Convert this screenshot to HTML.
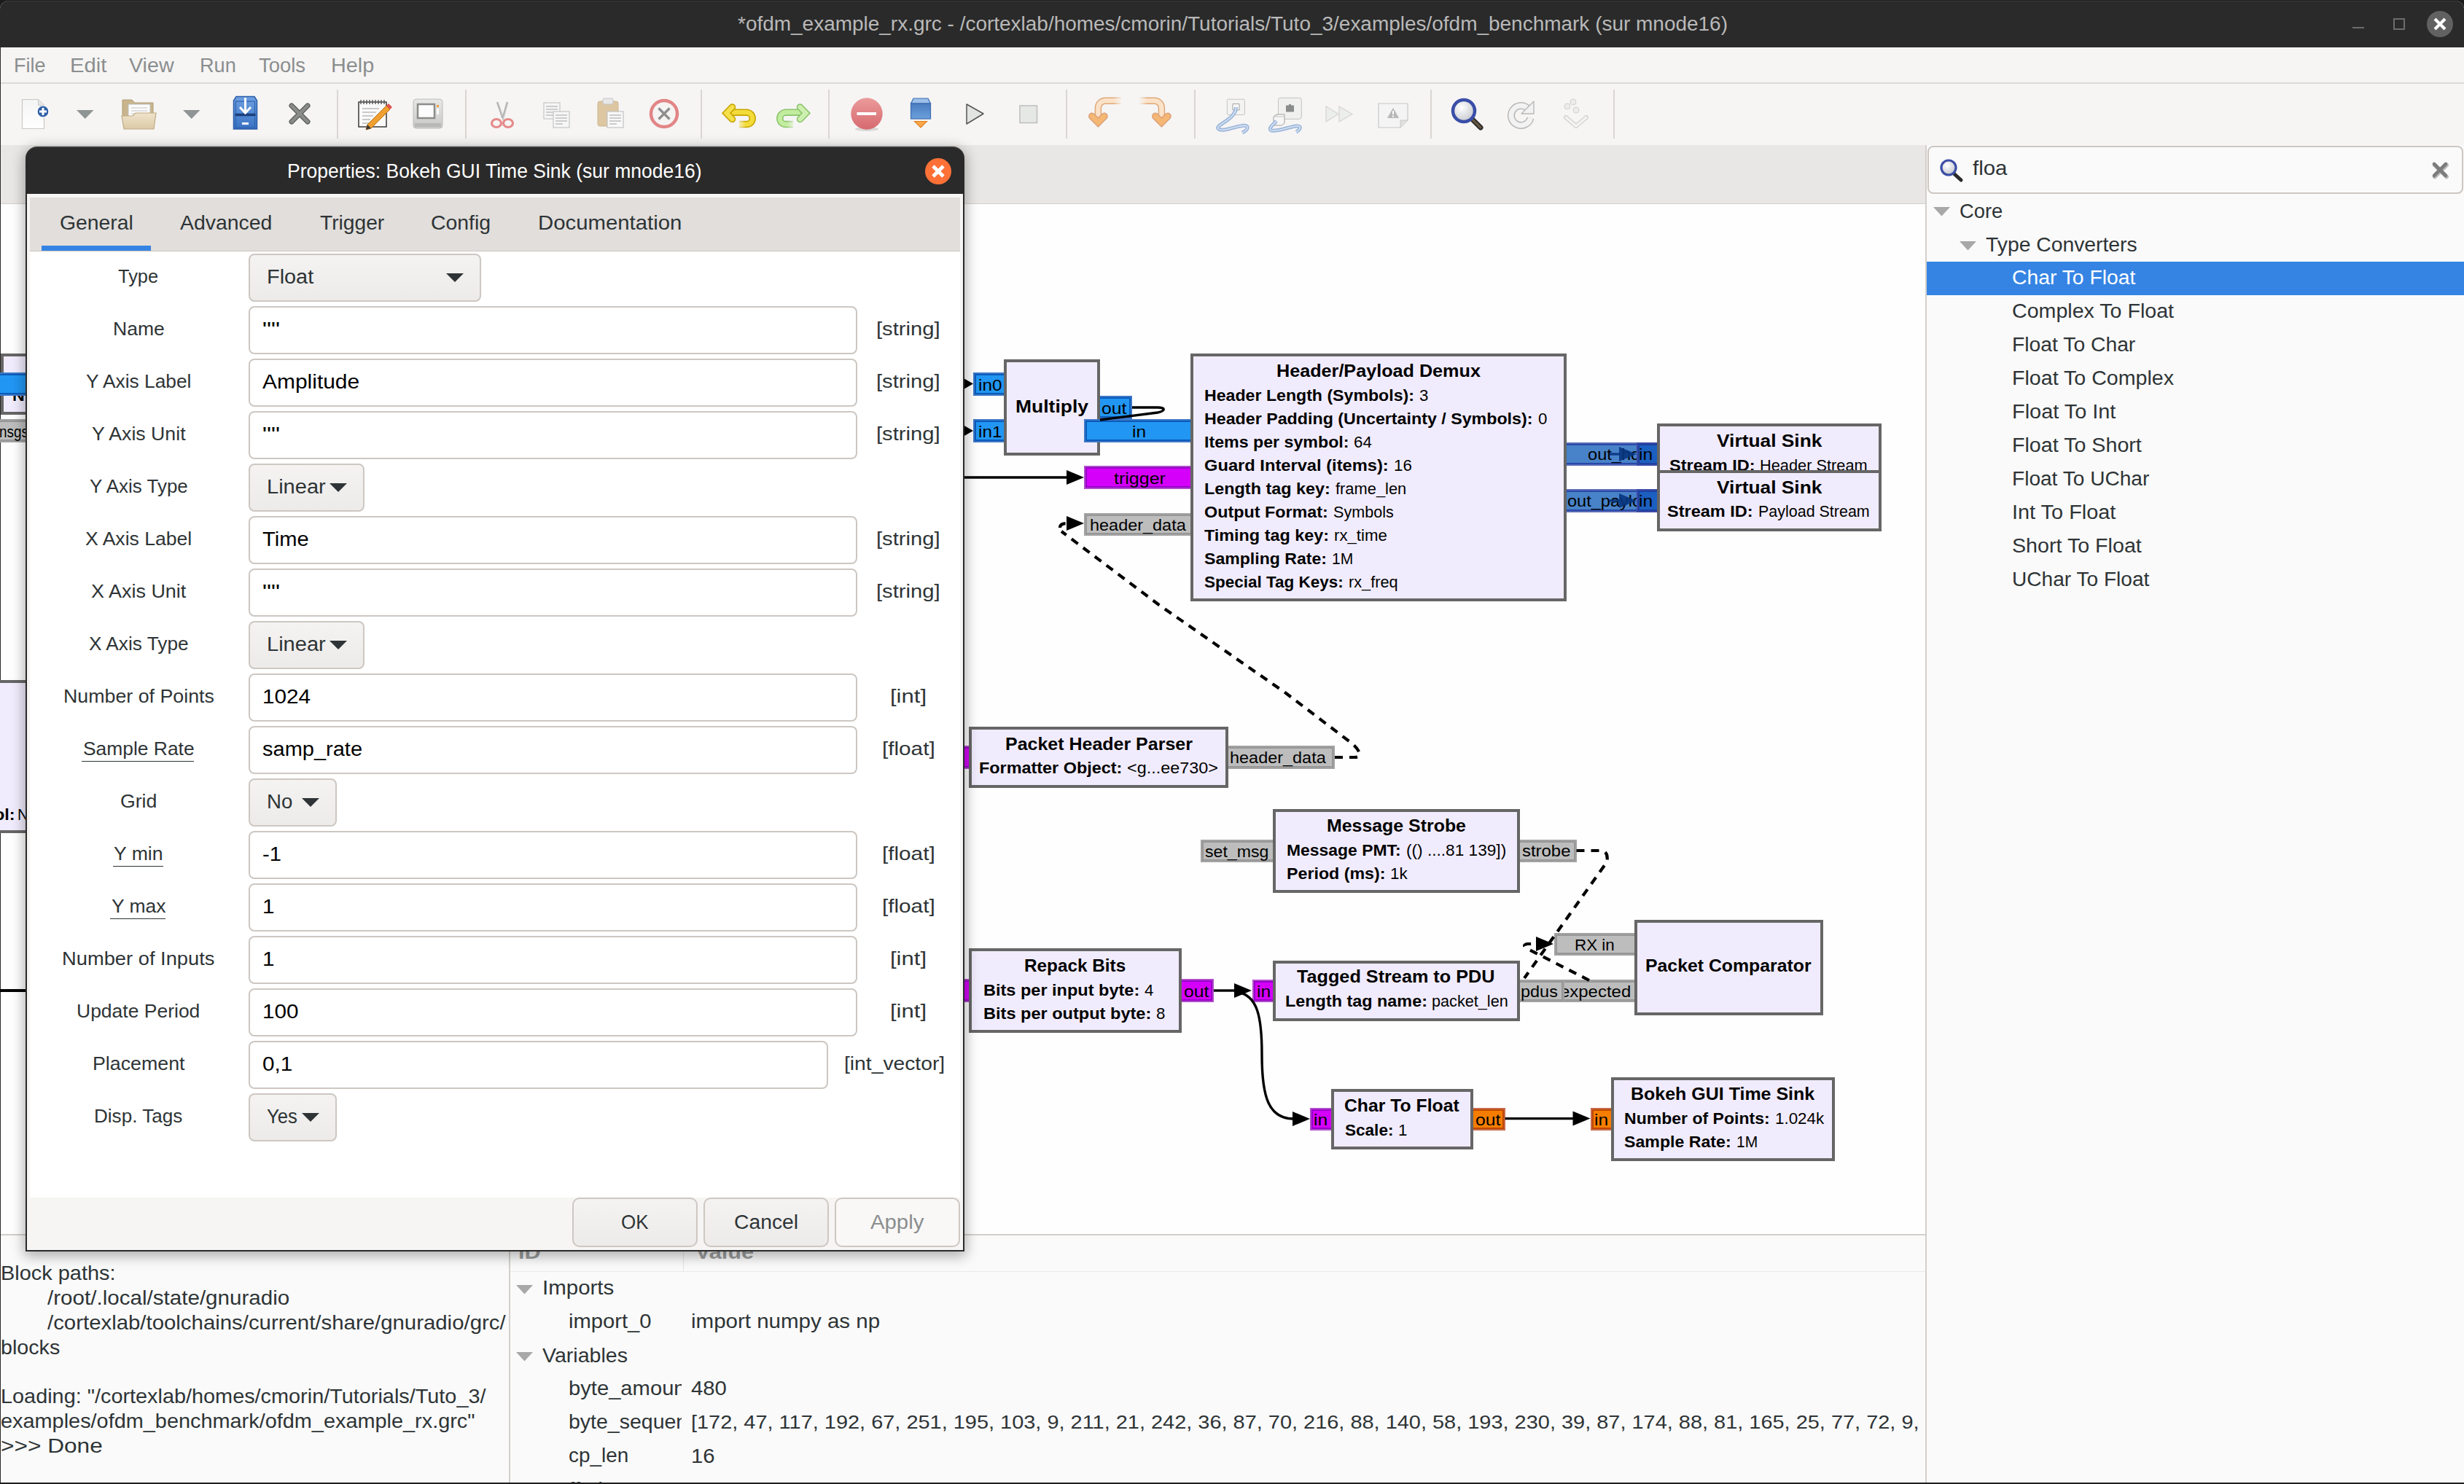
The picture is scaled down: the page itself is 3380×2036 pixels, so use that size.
<!DOCTYPE html>
<html><head><meta charset="utf-8">
<style>
*{margin:0;padding:0;box-sizing:border-box}
html,body{width:3380px;height:2036px;overflow:hidden;background:#1b1b1b;font-family:"Liberation Sans",sans-serif}
.a{position:absolute}
.t{position:absolute;white-space:pre;line-height:1;transform-origin:0 0}
svg{position:absolute;overflow:visible}
</style></head><body>
<div class="a" style="left:0px;top:0px;width:3380px;height:2036px;background:#1b1b1b"></div>
<div class="a" style="left:0;top:1px;width:3380px;height:2035px;border-radius:12px 12px 0 0;overflow:hidden;background:#f6f5f4"><div class="a" style="left:0;top:0;width:3380px;height:64px;background:#2a2a2a;border-top:1px solid #3b3b3b"></div></div>
<div class="t" style="left:1012.0px;top:20.1px;font-size:27.00px;color:#b9b9b9;transform:scaleX(1.0358);">*ofdm_example_rx.grc - /cortexlab/homes/cmorin/Tutorials/Tuto_3/examples/ofdm_benchmark (sur mnode16)</div>
<div class="a" style="left:3227px;top:37px;width:16px;height:2px;background:#6c6c6c"></div>
<div class="a" style="left:3283px;top:25px;width:16px;height:16px;border:2px solid #6c6c6c"></div>
<svg style="left:3329px;top:15px" width="36" height="36" viewBox="0 0 36 36"><circle cx="18" cy="18" r="18" fill="#616161"/><path d="M11 11L25 25M25 11L11 25" stroke="#fff" stroke-width="4.2" stroke-linecap="butt"/></svg>
<div class="a" style="left:0px;top:65px;width:3380px;height:48px;background:#f6f5f4"></div>
<div class="a" style="left:0px;top:113px;width:3380px;height:2px;background:#dcdad7"></div>
<div class="t" style="left:19.0px;top:75.6px;font-size:27.56px;color:#8b8e8f;transform:scaleX(0.9797);">File</div>
<div class="t" style="left:96.0px;top:75.6px;font-size:27.56px;color:#8b8e8f;transform:scaleX(1.0602);">Edit</div>
<div class="t" style="left:177.0px;top:75.6px;font-size:27.56px;color:#8b8e8f;transform:scaleX(1.0415);">View</div>
<div class="t" style="left:274.0px;top:75.6px;font-size:27.56px;color:#8b8e8f;transform:scaleX(0.9861);">Run</div>
<div class="t" style="left:355.0px;top:75.6px;font-size:27.56px;color:#8b8e8f;transform:scaleX(0.9955);">Tools</div>
<div class="t" style="left:454.0px;top:75.6px;font-size:27.56px;color:#8b8e8f;transform:scaleX(1.0457);">Help</div>
<div class="a" style="left:0px;top:115px;width:3380px;height:84px;background:#f6f5f4"></div>
<div class="a" style="left:462px;top:123px;width:2px;height:67px;background:#dad6d2"></div>
<div class="a" style="left:638px;top:123px;width:2px;height:67px;background:#dad6d2"></div>
<div class="a" style="left:961px;top:123px;width:2px;height:67px;background:#dad6d2"></div>
<div class="a" style="left:1136px;top:123px;width:2px;height:67px;background:#dad6d2"></div>
<div class="a" style="left:1462px;top:123px;width:2px;height:67px;background:#dad6d2"></div>
<div class="a" style="left:1638px;top:123px;width:2px;height:67px;background:#dad6d2"></div>
<div class="a" style="left:1962px;top:123px;width:2px;height:67px;background:#dad6d2"></div>
<div class="a" style="left:2213px;top:123px;width:2px;height:67px;background:#dad6d2"></div>
<div class="a" style="left:0px;top:199px;width:2641px;height:80px;background:#e8e7e5"></div>
<div class="a" style="left:0px;top:279px;width:2641px;height:1px;background:#d3cfcb"></div>
<div class="a" style="left:0px;top:280px;width:2641px;height:1414px;background:#fefefe"></div>
<div class="a" style="left:0px;top:1694px;width:2641px;height:342px;background:#fafafa"></div>
<div class="a" style="left:0px;top:1693px;width:2641px;height:1.5px;background:#d3cfcb"></div>
<div class="a" style="left:698px;top:1694px;width:1.5px;height:342px;background:#d3cfcb"></div>
<div class="a" style="left:2641px;top:199px;width:739px;height:1837px;background:#fafafa"></div>
<div class="a" style="left:2641px;top:199px;width:1.5px;height:1837px;background:#d3cfcb"></div>
<div class="a" style="left:0px;top:65px;width:1px;height:1971px;background:#2a2a2a"></div>
<svg style="left:28px;top:134px" width="42" height="46" viewBox="0 0 42 46"><defs><linearGradient id="pg" x1="0" y1="0" x2="0" y2="1"><stop offset="0" stop-color="#f4f4f4"/><stop offset="1" stop-color="#ffffff"/></linearGradient></defs><path d="M2.5 2.5H24.5L32.5 10.5V42.5H2.5Z" fill="url(#pg)" stroke="#c8c8c8" stroke-width="1.2"/><path d="M24.5 2.5V10.5H32.5" fill="#e6e6e6" stroke="#c8c8c8" stroke-width="1"/><circle cx="31" cy="19" r="8" fill="#2f5fa6" stroke="#ffffff" stroke-width="1.2"/><path d="M31 14V24M26 19H36" stroke="#fff" stroke-width="3"/></svg>
<svg style="left:105.4px;top:151px" width="24" height="12" viewBox="0 0 24 12"><path d="M0 0H23.5L11.75 12Z" fill="#8f9494"/></svg>
<svg style="left:251px;top:151px" width="24" height="12" viewBox="0 0 24 12"><path d="M0 0H23.5L11.75 12Z" fill="#8f9494"/></svg>
<svg style="left:166px;top:133px" width="50" height="46" viewBox="0 0 50 46"><path d="M2 4H15L19 8H44V30H2Z" fill="#c9b48d" stroke="#b09c74" stroke-width="1"/><rect x="10" y="10" width="30" height="22" fill="#fbfbfb" stroke="#bdbdbd" stroke-width="1"/><path d="M14 15H36M14 19H36M14 23H33M14 27H28" stroke="#c4c4c4" stroke-width="1.2"/><defs><linearGradient id="fg" x1="0" y1="0" x2="0" y2="1"><stop offset="0" stop-color="#efe3cc"/><stop offset="1" stop-color="#dccaa6"/></linearGradient></defs><path d="M1 26H16L20 22H48L45 44H4Z" fill="url(#fg)" stroke="#c0aa80" stroke-width="1.2"/></svg>
<svg style="left:319px;top:131px" width="36" height="48" viewBox="0 0 36 48"><defs><linearGradient id="sg" x1="0" y1="0" x2="0" y2="1"><stop offset="0" stop-color="#6fa0e0"/><stop offset="1" stop-color="#3a73c4"/></linearGradient></defs><path d="M1.5 7L5 1.5H30L33.5 7V46H1.5Z" fill="url(#sg)" stroke="#2a5ca8" stroke-width="1.5"/><rect x="4.5" y="8" width="26" height="17" fill="none" stroke="#2f63b0" stroke-width="1.2"/><rect x="4.5" y="28" width="26" height="16" fill="none" stroke="#2f63b0" stroke-width="1.2"/><rect x="3.5" y="25" width="28" height="3" fill="#1f3f78"/><path d="M13 37H22V40H13Z" fill="#fff"/><path d="M17.5 3V23" stroke="#fff" stroke-width="3"/><path d="M10 16L17.5 24L25 16" fill="none" stroke="#fff" stroke-width="3"/></svg>
<svg style="left:395px;top:140px" width="33" height="33" viewBox="0 0 33 33"><path d="M5 5L27 27M27 5L5 27" stroke="#5c5e5c" stroke-width="7" stroke-linecap="round"/><path d="M5 5L27 27M27 5L5 27" stroke="#8a8c8a" stroke-width="4.5" stroke-linecap="round"/></svg>
<svg style="left:490px;top:135px" width="50" height="42" viewBox="0 0 50 42"><rect x="2" y="5" width="38" height="34" fill="#fafafa" stroke="#3a3a3a" stroke-width="1.5"/><path d="M5 2V8M9 2V8M13 2V8M17 2V8M21 2V8M25 2V8M29 2V8M33 2V8M37 2V8" stroke="#555" stroke-width="1.4"/><path d="M7 14H30M7 19H26M7 24H22M7 29H18M7 34H16" stroke="#9a9a9a" stroke-width="1.2"/><path d="M14 36L40 10L45 15L19 41L12 43Z" fill="#f0a030" stroke="#b86a10" stroke-width="1"/><path d="M40 10L43 7L48 12L45 15Z" fill="#e05050"/><path d="M12 43L14 36L19 41Z" fill="#3a3a3a"/></svg>
<svg style="left:566px;top:135px" width="44" height="44" viewBox="0 0 44 44"><defs><linearGradient id="mg" x1="0" y1="0" x2="0" y2="1"><stop offset="0" stop-color="#e8e8e6"/><stop offset="1" stop-color="#c8c8c6"/></linearGradient></defs><rect x="1" y="1" width="40" height="40" rx="4" fill="url(#mg)" stroke="#bcbcba" stroke-width="1"/><rect x="7" y="8" width="23" height="19" fill="#fcfcfc" stroke="#8c8c8a" stroke-width="2.5"/><rect x="33" y="9" width="3" height="3" fill="#f0a040"/><rect x="33" y="14" width="3" height="8" fill="#fafafa"/><rect x="3" y="34" width="36" height="5" fill="#b8b8b6"/></svg>
<svg style="left:673px;top:138px" width="32" height="40" viewBox="0 0 32 40"><path d="M9 2L17 24L23 2" fill="none" stroke="#c8c8c8" stroke-width="3"/><path d="M9 2L16 24M23 2L16 24" fill="none" stroke="#a8a8a8" stroke-width="1"/><ellipse cx="8" cy="31" rx="6.5" ry="5.5" fill="none" stroke="#e68a8a" stroke-width="3.2"/><ellipse cx="24" cy="31" rx="6.5" ry="5.5" fill="none" stroke="#e68a8a" stroke-width="3.2"/></svg>
<svg style="left:745px;top:140px" width="38" height="38" viewBox="0 0 38 38"><rect x="1" y="1" width="22" height="22" fill="#f6f6f6" stroke="#c6c6c6" stroke-width="1.2"/><path d="M4 6H20M4 10H20M4 14H20M4 18H14" stroke="#c0c0c0" stroke-width="1.4"/><rect x="14" y="13" width="22" height="22" fill="#f6f6f6" stroke="#c6c6c6" stroke-width="1.2"/><path d="M17 18H33M17 22H33M17 26H33M17 30H27" stroke="#c0c0c0" stroke-width="1.4"/></svg>
<svg style="left:818px;top:134px" width="40" height="44" viewBox="0 0 40 44"><rect x="2" y="5" width="28" height="34" rx="3" fill="#dcc7a2" stroke="#cdb68e" stroke-width="1"/><rect x="9" y="1" width="14" height="8" rx="2" fill="#e8e8e8" stroke="#c4c4c4" stroke-width="1"/><rect x="15" y="19" width="22" height="22" fill="#f8f8f8" stroke="#c4c4c4" stroke-width="1.2"/><path d="M18 24H34M18 28H34M18 32H34M18 36H28" stroke="#bdbdbd" stroke-width="1.4"/></svg>
<svg style="left:889px;top:134px" width="44" height="44" viewBox="0 0 44 44"><circle cx="22" cy="22" r="18" fill="#f6f3f3" stroke="#e28585" stroke-width="4.5"/><path d="M14.5 14.5L29.5 29.5M29.5 14.5L14.5 29.5" stroke="#8d8d8d" stroke-width="3.2"/></svg>
<svg style="left:988px;top:138px" width="52" height="42" viewBox="0 0 52 42"><defs><linearGradient id="fd1" x1="0" y1="0" x2="1" y2="0"><stop offset="0" stop-color="#f6f5f4" stop-opacity="1"/><stop offset="1" stop-color="#f6f5f4" stop-opacity="0"/></linearGradient><linearGradient id="fd2" x1="1" y1="0" x2="0" y2="0"><stop offset="0" stop-color="#f6f5f4" stop-opacity="1"/><stop offset="1" stop-color="#f6f5f4" stop-opacity="0"/></linearGradient></defs><path d="M26 32.6H36A8.2 8.2 0 0 0 36 16.2H12" fill="none" stroke="#c9a400" stroke-width="9.5"/><path d="M26 32.6H36A8.2 8.2 0 0 0 36 16.2H12" fill="none" stroke="#f2dc3a" stroke-width="6.2"/><path d="M16.5 9L8.5 17.2L16.5 25.5" fill="none" stroke="#c9a400" stroke-width="9.5" stroke-linejoin="miter" stroke-linecap="round"/><path d="M16.5 9L8.5 17.2L16.5 25.5" fill="none" stroke="#f4e04a" stroke-width="6.2" stroke-linejoin="miter" stroke-linecap="round"/><rect x="21" y="26.5" width="14" height="12" fill="url(#fd1)"/></svg>
<svg style="left:1062px;top:138px" width="52" height="42" viewBox="0 0 52 42"><path d="M26 32.6H16A8.2 8.2 0 0 1 16 16.2H40" fill="none" stroke="#8cc46c" stroke-width="9.5"/><path d="M26 32.6H16A8.2 8.2 0 0 1 16 16.2H40" fill="none" stroke="#c2ec9e" stroke-width="6.2"/><path d="M35.5 9L43.5 17.2L35.5 25.5" fill="none" stroke="#8cc46c" stroke-width="9.5" stroke-linejoin="miter" stroke-linecap="round"/><path d="M35.5 9L43.5 17.2L35.5 25.5" fill="none" stroke="#cdf0b0" stroke-width="6.2" stroke-linejoin="miter" stroke-linecap="round"/><rect x="17" y="26.5" width="14" height="12" fill="url(#fd2)"/></svg>
<svg style="left:1166px;top:133px" width="46" height="48" viewBox="0 0 46 48"><defs><linearGradient id="rg" x1="0" y1="0" x2="0" y2="1"><stop offset="0" stop-color="#eb9a9a"/><stop offset="1" stop-color="#d66a70"/></linearGradient></defs><ellipse cx="23" cy="44" rx="16" ry="3" fill="#000" opacity=".12"/><circle cx="23" cy="23" r="21.7" fill="url(#rg)"/><rect x="9.5" y="21" width="26.5" height="4" fill="#fff"/></svg>
<svg style="left:1247px;top:133px" width="32" height="46" viewBox="0 0 32 46"><defs><linearGradient id="cg" x1="0" y1="0" x2="0" y2="1"><stop offset="0" stop-color="#4a7cc0"/><stop offset="1" stop-color="#6ca0dc"/></linearGradient></defs><path d="M2.5 9L6 2H26L29.5 9Z" fill="#9cc0ea" stroke="#3d6cb0" stroke-width="1.2"/><rect x="2.5" y="9" width="27" height="21" fill="url(#cg)" stroke="#3d6cb0" stroke-width="1.2"/><path d="M7.5 33.5H24.5L16 42Z" fill="#f8a848" stroke="#e08020" stroke-width="1.2"/></svg>
<svg style="left:1323px;top:140px" width="30" height="34" viewBox="0 0 30 34"><path d="M3 3L26 16L3 30Z" fill="#e2e4e2" stroke="#555" stroke-width="1.5" stroke-linejoin="round"/></svg>
<svg style="left:1397px;top:143px" width="28" height="28" viewBox="0 0 28 28"><rect x="2" y="2" width="23.5" height="23.5" fill="#e6e8e6" stroke="#bdbdbd" stroke-width="1.5"/></svg>
<svg style="left:1490px;top:132px" width="50" height="48" viewBox="0 0 50 48"><defs><linearGradient id="of1" x1="0" y1="0" x2="1" y2="0"><stop offset="0.55" stop-color="#f6f5f4" stop-opacity="0"/><stop offset="1" stop-color="#f6f5f4" stop-opacity="1"/></linearGradient></defs><path d="M16.4 36V16A9.8 9.8 0 0 1 26.2 6.2H48" fill="none" stroke="#e0a878" stroke-width="9.5"/><path d="M16.4 36V16A9.8 9.8 0 0 1 26.2 6.2H48" fill="none" stroke="#fbe2c8" stroke-width="6.5"/><path d="M8 27.5L16.4 36L24.8 27.5" fill="none" stroke="#dca07a" stroke-width="10" stroke-linejoin="miter" stroke-linecap="round"/><path d="M8 27.5L16.4 36L24.8 27.5" fill="none" stroke="#f4b774" stroke-width="7" stroke-linejoin="miter" stroke-linecap="round"/><rect x="22" y="0" width="28" height="13" fill="url(#of1)"/></svg>
<svg style="left:1562px;top:132px" width="50" height="48" viewBox="0 0 50 48"><defs><linearGradient id="of2" x1="1" y1="0" x2="0" y2="0"><stop offset="0.55" stop-color="#f6f5f4" stop-opacity="0"/><stop offset="1" stop-color="#f6f5f4" stop-opacity="1"/></linearGradient></defs><path d="M31.4 36V16A9.8 9.8 0 0 0 21.6 6.2H0" fill="none" stroke="#e0a878" stroke-width="9.5"/><path d="M31.4 36V16A9.8 9.8 0 0 0 21.6 6.2H0" fill="none" stroke="#fbe2c8" stroke-width="6.5"/><path d="M23 27.5L31.4 36L39.8 27.5" fill="none" stroke="#dca07a" stroke-width="10" stroke-linejoin="miter" stroke-linecap="round"/><path d="M23 27.5L31.4 36L39.8 27.5" fill="none" stroke="#f4b774" stroke-width="7" stroke-linejoin="miter" stroke-linecap="round"/><rect x="0" y="0" width="26" height="13" fill="url(#of2)"/></svg>
<svg style="left:1665px;top:134px" width="50" height="48" viewBox="0 0 50 48"><rect x="18.3" y="2.2" width="24.1" height="21.3" rx="1.5" fill="#f3f3f2" stroke="#c4c4c2" stroke-width="1"/><path d="M26 8.5H35V17H26Z" fill="#f8f8f8" stroke="#9a9a9a" stroke-width="0.9"/><path d="M30.5 13C30.5 26 14 33 7 39C3 43 8 46 20 43C32 40 44 36 46 40C47 43 43 46 39 48" fill="none" stroke="#9cb6da" stroke-width="5"/><path d="M30.5 13C30.5 26 14 33 7 39C3 43 8 46 20 43C32 40 44 36 46 40C47 43 43 46 39 48" fill="none" stroke="#d8e4f4" stroke-width="1.6"/></svg>
<svg style="left:1738px;top:132px" width="50" height="50" viewBox="0 0 50 50"><rect x="15.5" y="2.3" width="31.8" height="29" rx="3" fill="#f0f0ef" stroke="#c2c2c0" stroke-width="1"/><path d="M26 12.5H30V11H33V12.5H37V21.5H26Z" fill="#8a8c8c"/><path d="M9 28L13 25H24V37L20 40H9Z" fill="#f6f6f6" stroke="#9a9a9a" stroke-width="0.9"/><path d="M13 25V28H9M13 28H24" fill="none" stroke="#bdbdbd" stroke-width="0.8"/><path d="M13 34C8 39 1 45 6 47C14 49 30 42 40 41C48 40 46 46 40 49" fill="none" stroke="#9cb6da" stroke-width="5"/><path d="M13 34C8 39 1 45 6 47C14 49 30 42 40 41C48 40 46 46 40 49" fill="none" stroke="#d8e4f4" stroke-width="1.6"/></svg>
<svg style="left:1817px;top:144px" width="42" height="26" viewBox="0 0 42 26"><path d="M2 2L19 12.5L2 23Z" fill="#eceeec" stroke="#d4d4d4" stroke-width="1.2"/><path d="M20 2L38 12.5L20 23Z" fill="#eceeec" stroke="#d4d4d4" stroke-width="1.2"/></svg>
<svg style="left:1889px;top:140px" width="48" height="38" viewBox="0 0 48 38"><path d="M2 2H42V25L32 35H2Z" fill="#f4f4f4" stroke="#c8c8c8" stroke-width="1.2"/><path d="M32 35V25H42" fill="#e0e0e0" stroke="#c8c8c8" stroke-width="1"/><path d="M22 8L30 22H14Z" fill="#b8b8b8"/><rect x="21" y="12" width="2" height="5" fill="#fff"/><rect x="21" y="18.5" width="2" height="2" fill="#fff"/></svg>
<svg style="left:1988px;top:132px" width="50" height="50" viewBox="0 0 50 50"><defs><radialGradient id="sg2" cx="40%" cy="35%" r="65%"><stop offset="0" stop-color="#ffffff"/><stop offset="1" stop-color="#c8cad0"/></radialGradient></defs><path d="M31 31L43 43" stroke="#2a2a2a" stroke-width="7" stroke-linecap="round"/><path d="M31 31L43 43" stroke="#6a5a40" stroke-width="3" stroke-linecap="round"/><circle cx="20" cy="20" r="15" fill="url(#sg2)" stroke="#3a4ea8" stroke-width="4.5"/></svg>
<svg style="left:2066px;top:137px" width="42" height="42" viewBox="0 0 42 42"><path d="M29.5 11.5A13.5 13.5 0 1 0 33.5 25" fill="none" stroke="#b8b8b8" stroke-width="10"/><path d="M29.5 11.5A13.5 13.5 0 1 0 33.5 25" fill="none" stroke="#f2f2f2" stroke-width="7"/><path d="M38 2V19H21Z" fill="#f2f2f2" stroke="#b8b8b8" stroke-width="1.4" stroke-linejoin="round"/></svg>
<svg style="left:2143px;top:135px" width="40" height="42" viewBox="0 0 40 42"><circle cx="7" cy="11" r="4" fill="#ececec" stroke="#d0d0d0"/><circle cx="15" cy="5" r="4" fill="#ececec" stroke="#d0d0d0"/><circle cx="19" cy="16" r="4" fill="#ececec" stroke="#d0d0d0"/><path d="M5 26L19 38L33 26" fill="none" stroke="#d4d4d4" stroke-width="6" stroke-linejoin="round" stroke-linecap="round"/><path d="M5 26L19 38L33 26" fill="none" stroke="#f4f4f4" stroke-width="3" stroke-linejoin="round" stroke-linecap="round"/></svg>
<div class="a" style="left:0;top:280px;width:2641px;height:1414px;overflow:hidden"><div class="a" style="left:0;top:-280px;width:2641px;height:1694px">
<div class="a" style="left:1px;top:485px;width:199px;height:84px;background:#f1ecfd;border:4px solid #666666"></div>
<div class="t" style="left:17.0px;top:532.0px;font-size:21.20px;font-weight:bold;color:#000;transform:scaleX(1.0933);">N</div>
<div class="a" style="left:-10px;top:511px;width:210px;height:32px;background:#2196f3;border:2px solid #3d79c9;box-shadow:inset 0 0 0 2px #0c5bb8"></div>
<div class="a" style="left:-10px;top:575px;width:210px;height:32px;background:#bdbdbd;border:2px solid #a3a3a3;box-shadow:inset 0 0 0 2px #979797"></div>
<div class="t" style="left:-1.0px;top:582.0px;font-size:22.30px;color:#000;transform:scaleX(0.8492);">nsgs</div>
<div class="a" style="left:-300px;top:933px;width:500px;height:210px;background:#f1ecfd;border:4px solid #666666"></div>
<div class="t" style="left:-8.0px;top:1107.0px;font-size:21.20px;font-weight:bold;color:#000;transform:scaleX(1.1040);">ol:</div>
<div class="t" style="left:24.0px;top:1107.0px;font-size:21.20px;color:#000;transform:scaleX(0.9772);">N</div>
<div class="a" style="left:0px;top:1357px;width:200px;height:3.5px;background:#000"></div>
<div class="a" style="left:1335px;top:511px;width:46px;height:32px;background:#2196f3;border:2px solid #3d79c9;box-shadow:inset 0 0 0 2px #0c5bb8"></div>
<div class="t" style="left:1342.0px;top:517.7px;font-size:22.26px;color:#000;transform:scaleX(1.0942);">in0</div>
<div class="a" style="left:1335px;top:575px;width:46px;height:32px;background:#2196f3;border:2px solid #3d79c9;box-shadow:inset 0 0 0 2px #0c5bb8"></div>
<div class="t" style="left:1342.0px;top:581.7px;font-size:22.26px;color:#000;transform:scaleX(1.0942);">in1</div>
<div class="a" style="left:1505px;top:543px;width:48px;height:32px;background:#2196f3;border:2px solid #3d79c9;box-shadow:inset 0 0 0 2px #0c5bb8"></div>
<div class="t" style="left:1511.0px;top:549.5px;font-size:22.26px;color:#000;transform:scaleX(1.1114);">out</div>
<div class="a" style="left:1377px;top:493px;width:132px;height:132px;background:#f1ecfd;border:4px solid #666666"></div>
<div class="t" style="left:1393.0px;top:547.2px;font-size:23.32px;font-weight:bold;color:#000;transform:scaleX(1.1352);">Multiply</div>
<div class="a" style="left:1487px;top:575px;width:150px;height:32px;background:#2196f3;border:2px solid #3d79c9;box-shadow:inset 0 0 0 2px #0c5bb8"></div>
<div class="t" style="left:1552.9px;top:581.7px;font-size:22.26px;color:#000;transform:scaleX(1.1049);">in</div>
<div class="a" style="left:1487px;top:639px;width:150px;height:32px;background:#d500fa;border:2px solid #b24ccc;box-shadow:inset 0 0 0 2px #9800c8"></div>
<div class="t" style="left:1528.2px;top:645.6px;font-size:22.26px;color:#000;transform:scaleX(1.1239);">trigger</div>
<div class="a" style="left:1487px;top:703.5px;width:150px;height:31.5px;background:#bdbdbd;border:2px solid #a3a3a3;box-shadow:inset 0 0 0 2px #979797"></div>
<div class="t" style="left:1495.1px;top:709.7px;font-size:22.26px;color:#000;transform:scaleX(1.0541);">header_data</div>
<div class="a" style="left:2145px;top:607px;width:128px;height:32px;background:#4882c8;border:2px solid #5a6cb8;box-shadow:inset 0 0 0 2px #2a48a8"></div>
<div class="t" style="left:2177.7px;top:613.1px;font-size:22.26px;color:#000;transform:scaleX(1.0618);">out_hdr</div>
<div class="a" style="left:2145px;top:671px;width:128px;height:32px;background:#4882c8;border:2px solid #5a6cb8;box-shadow:inset 0 0 0 2px #2a48a8"></div>
<div class="t" style="left:2150.0px;top:677.1px;font-size:22.26px;color:#000;transform:scaleX(1.0585);">out_payload</div>
<div class="a" style="left:1633px;top:485px;width:516px;height:340px;background:#f1ecfd;border:4px solid #666666"></div>
<div class="t" style="left:1751.0px;top:497.9px;font-size:23.32px;font-weight:bold;color:#000;transform:scaleX(1.0801);">Header/Payload Demux</div>
<div class="t" style="left:1652.0px;top:531.7px;font-size:21.20px;font-weight:bold;color:#000;transform:scaleX(1.0920);">Header Length (Symbols):</div>
<div class="t" style="left:1946.9px;top:531.7px;font-size:21.20px;color:#000;transform:scaleX(1.0522);">3</div>
<div class="t" style="left:1652.0px;top:563.8px;font-size:21.20px;font-weight:bold;color:#000;transform:scaleX(1.0963);">Header Padding (Uncertainty / Symbols):</div>
<div class="t" style="left:2109.5px;top:563.8px;font-size:21.20px;color:#000;transform:scaleX(1.0522);">0</div>
<div class="t" style="left:1652.0px;top:595.8px;font-size:21.20px;font-weight:bold;color:#000;transform:scaleX(1.0945);">Items per symbol:</div>
<div class="t" style="left:1857.4px;top:595.8px;font-size:21.20px;color:#000;transform:scaleX(1.0522);">64</div>
<div class="t" style="left:1652.0px;top:627.9px;font-size:21.20px;font-weight:bold;color:#000;transform:scaleX(1.1179);">Guard Interval (items):</div>
<div class="t" style="left:1911.6px;top:627.9px;font-size:21.20px;color:#000;transform:scaleX(1.0522);">16</div>
<div class="t" style="left:1652.0px;top:660.0px;font-size:21.20px;font-weight:bold;color:#000;transform:scaleX(1.1036);">Length tag key:</div>
<div class="t" style="left:1831.7px;top:660.0px;font-size:21.20px;color:#000;transform:scaleX(1.0326);">frame_len</div>
<div class="t" style="left:1652.0px;top:692.0px;font-size:21.20px;font-weight:bold;color:#000;transform:scaleX(1.1012);">Output Format:</div>
<div class="t" style="left:1828.7px;top:692.0px;font-size:21.20px;color:#000;transform:scaleX(1.0185);">Symbols</div>
<div class="t" style="left:1652.0px;top:724.1px;font-size:21.20px;font-weight:bold;color:#000;transform:scaleX(1.1026);">Timing tag key:</div>
<div class="t" style="left:1829.8px;top:724.1px;font-size:21.20px;color:#000;transform:scaleX(1.0480);">rx_time</div>
<div class="t" style="left:1652.0px;top:756.2px;font-size:21.20px;font-weight:bold;color:#000;transform:scaleX(1.0887);">Sampling Rate:</div>
<div class="t" style="left:1826.8px;top:756.2px;font-size:21.20px;color:#000;transform:scaleX(0.9925);">1M</div>
<div class="t" style="left:1652.0px;top:788.2px;font-size:21.20px;font-weight:bold;color:#000;transform:scaleX(1.0613);">Special Tag Keys:</div>
<div class="t" style="left:1849.7px;top:788.2px;font-size:21.20px;color:#000;transform:scaleX(1.0247);">rx_freq</div>
<div class="a" style="left:2245px;top:607px;width:32px;height:32px;background:#1b5fc0;border:2px solid #3a4aa8;box-shadow:inset 0 0 0 2px #2040a0"></div>
<div class="t" style="left:2248.0px;top:613.1px;font-size:22.26px;color:#000;transform:scaleX(1.1049);">in</div>
<div class="a" style="left:2273px;top:581px;width:308px;height:68px;background:#f1ecfd;border:4px solid #666666"></div>
<div class="t" style="left:2354.8px;top:594.4px;font-size:23.32px;font-weight:bold;color:#000;transform:scaleX(1.1292);">Virtual Sink</div>
<div class="t" style="left:2289.7px;top:627.5px;font-size:21.20px;font-weight:bold;color:#000;transform:scaleX(1.1102);">Stream ID:</div>
<div class="t" style="left:2414.2px;top:627.5px;font-size:21.20px;color:#000;transform:scaleX(1.0278);">Header Stream</div>
<div class="a" style="left:2245px;top:671px;width:32px;height:32px;background:#1b5fc0;border:2px solid #3a4aa8;box-shadow:inset 0 0 0 2px #2040a0"></div>
<div class="t" style="left:2248.0px;top:677.1px;font-size:22.26px;color:#000;transform:scaleX(1.1049);">in</div>
<div class="a" style="left:2273px;top:645px;width:308px;height:84px;background:#f1ecfd;border:4px solid #666666"></div>
<div class="t" style="left:2354.8px;top:657.8px;font-size:23.32px;font-weight:bold;color:#000;transform:scaleX(1.1292);">Virtual Sink</div>
<div class="t" style="left:2287.0px;top:691.4px;font-size:21.20px;font-weight:bold;color:#000;transform:scaleX(1.1102);">Stream ID:</div>
<div class="t" style="left:2411.5px;top:691.4px;font-size:21.20px;color:#000;transform:scaleX(1.0130);">Payload Stream</div>
<div class="a" style="left:1300px;top:1023px;width:33px;height:32px;background:#d500fa;border:2px solid #b24ccc;box-shadow:inset 0 0 0 2px #9800c8"></div>
<div class="a" style="left:1681px;top:1023px;width:150px;height:32px;background:#bdbdbd;border:2px solid #a3a3a3;box-shadow:inset 0 0 0 2px #979797"></div>
<div class="t" style="left:1687.0px;top:1029.1px;font-size:22.26px;color:#000;transform:scaleX(1.0541);">header_data</div>
<div class="a" style="left:1329px;top:997px;width:356px;height:84px;background:#f1ecfd;border:4px solid #666666"></div>
<div class="t" style="left:1378.5px;top:1009.7px;font-size:23.32px;font-weight:bold;color:#000;transform:scaleX(1.0715);">Packet Header Parser</div>
<div class="t" style="left:1342.7px;top:1043.4px;font-size:21.20px;font-weight:bold;color:#000;transform:scaleX(1.1043);">Formatter Object:</div>
<div class="t" style="left:1545.9px;top:1043.4px;font-size:21.20px;color:#000;transform:scaleX(1.1033);">&lt;g...ee730&gt;</div>
<div class="a" style="left:1647px;top:1151.5px;width:102.5px;height:31.0px;background:#bdbdbd;border:2px solid #a3a3a3;box-shadow:inset 0 0 0 2px #979797"></div>
<div class="t" style="left:1653.0px;top:1157.7px;font-size:22.26px;color:#000;transform:scaleX(1.0380);">set_msg</div>
<div class="a" style="left:2080.5px;top:1151.5px;width:82.0px;height:31.0px;background:#bdbdbd;border:2px solid #a3a3a3;box-shadow:inset 0 0 0 2px #979797"></div>
<div class="t" style="left:2087.5px;top:1157.1px;font-size:22.26px;color:#000;transform:scaleX(1.0740);">strobe</div>
<div class="a" style="left:1745.5px;top:1109.5px;width:339.0px;height:115.5px;background:#f1ecfd;border:4px solid #666666"></div>
<div class="t" style="left:1819.5px;top:1122.0px;font-size:23.32px;font-weight:bold;color:#000;transform:scaleX(1.0679);">Message Strobe</div>
<div class="t" style="left:1765.0px;top:1155.6px;font-size:21.20px;font-weight:bold;color:#000;transform:scaleX(1.0814);">Message PMT:</div>
<div class="t" style="left:1928.5px;top:1155.6px;font-size:21.20px;color:#000;transform:scaleX(1.0689);">(() ....81 139])</div>
<div class="t" style="left:1765.0px;top:1187.6px;font-size:21.20px;font-weight:bold;color:#000;transform:scaleX(1.0956);">Period (ms):</div>
<div class="t" style="left:1907.3px;top:1187.6px;font-size:21.20px;color:#000;transform:scaleX(1.0585);">1k</div>
<div class="a" style="left:1300px;top:1343px;width:33px;height:32px;background:#d500fa;border:2px solid #b24ccc;box-shadow:inset 0 0 0 2px #9800c8"></div>
<div class="a" style="left:1617px;top:1343px;width:48px;height:32px;background:#d500fa;border:2px solid #b24ccc;box-shadow:inset 0 0 0 2px #9800c8"></div>
<div class="t" style="left:1624.0px;top:1349.5px;font-size:22.26px;color:#000;transform:scaleX(1.1114);">out</div>
<div class="a" style="left:1329px;top:1301px;width:292px;height:116px;background:#f1ecfd;border:4px solid #666666"></div>
<div class="t" style="left:1405.3px;top:1313.7px;font-size:23.32px;font-weight:bold;color:#000;transform:scaleX(1.0434);">Repack Bits</div>
<div class="t" style="left:1348.7px;top:1347.8px;font-size:21.20px;font-weight:bold;color:#000;transform:scaleX(1.1099);">Bits per input byte:</div>
<div class="t" style="left:1569.9px;top:1347.8px;font-size:21.20px;color:#000;transform:scaleX(1.0522);">4</div>
<div class="t" style="left:1348.7px;top:1379.5px;font-size:21.20px;font-weight:bold;color:#000;transform:scaleX(1.1116);">Bits per output byte:</div>
<div class="t" style="left:1585.9px;top:1379.5px;font-size:21.20px;color:#000;transform:scaleX(1.0522);">8</div>
<div class="a" style="left:2131.5px;top:1280px;width:114.5px;height:31px;background:#bdbdbd;border:2px solid #a3a3a3;box-shadow:inset 0 0 0 2px #979797"></div>
<div class="t" style="left:2159.9px;top:1285.9px;font-size:22.26px;color:#000;transform:scaleX(1.0067);">RX in</div>
<div class="a" style="left:2131.5px;top:1344px;width:114.5px;height:31px;background:#bdbdbd;border:2px solid #a3a3a3;box-shadow:inset 0 0 0 2px #979797"></div>
<div class="t" style="left:2140.2px;top:1349.5px;font-size:22.26px;color:#000;transform:scaleX(1.0765);">expected</div>
<div class="a" style="left:2242px;top:1261.5px;width:258.5px;height:131.0px;background:#f1ecfd;border:4px solid #666666"></div>
<div class="t" style="left:2257.4px;top:1313.9px;font-size:23.32px;font-weight:bold;color:#000;transform:scaleX(1.0648);">Packet Comparator</div>
<div class="a" style="left:1717.5px;top:1344px;width:32.0px;height:31px;background:#d500fa;border:2px solid #b24ccc;box-shadow:inset 0 0 0 2px #9800c8"></div>
<div class="t" style="left:1724.0px;top:1349.5px;font-size:22.26px;color:#000;transform:scaleX(1.1049);">in</div>
<div class="a" style="left:2080.5px;top:1344px;width:65.5px;height:31px;background:#bdbdbd;border:2px solid #a3a3a3;box-shadow:inset 0 0 0 2px #979797"></div>
<div class="t" style="left:2086.0px;top:1349.5px;font-size:22.26px;color:#000;transform:scaleX(1.0547);">pdus</div>
<div class="a" style="left:1745.5px;top:1318px;width:339.0px;height:82.5px;background:#f1ecfd;border:4px solid #666666"></div>
<div class="t" style="left:1779.2px;top:1329.2px;font-size:23.32px;font-weight:bold;color:#000;transform:scaleX(1.0819);">Tagged Stream to PDU</div>
<div class="t" style="left:1762.5px;top:1363.4px;font-size:21.20px;font-weight:bold;color:#000;transform:scaleX(1.1043);">Length tag name:</div>
<div class="t" style="left:1964.4px;top:1363.4px;font-size:21.20px;color:#000;transform:scaleX(1.0221);">packet_len</div>
<div class="a" style="left:1797px;top:1519.5px;width:32.5px;height:31.0px;background:#d500fa;border:2px solid #b24ccc;box-shadow:inset 0 0 0 2px #9800c8"></div>
<div class="t" style="left:1802.0px;top:1525.6px;font-size:22.26px;color:#000;transform:scaleX(1.1049);">in</div>
<div class="a" style="left:2017px;top:1519.5px;width:47.5px;height:31.0px;background:#f67d00;border:2px solid #c86a4a;box-shadow:inset 0 0 0 2px #c04800"></div>
<div class="t" style="left:2023.7px;top:1525.6px;font-size:22.26px;color:#000;transform:scaleX(1.1114);">out</div>
<div class="a" style="left:1825.5px;top:1494px;width:195.5px;height:83px;background:#f1ecfd;border:4px solid #666666"></div>
<div class="t" style="left:1844.4px;top:1505.8px;font-size:23.32px;font-weight:bold;color:#000;transform:scaleX(1.0616);">Char To Float</div>
<div class="t" style="left:1845.0px;top:1539.7px;font-size:21.20px;font-weight:bold;color:#000;transform:scaleX(1.0642);">Scale:</div>
<div class="t" style="left:1918.3px;top:1539.7px;font-size:21.20px;color:#000;transform:scaleX(1.0522);">1</div>
<div class="a" style="left:2181.5px;top:1519.5px;width:32.5px;height:31.0px;background:#f67d00;border:2px solid #c86a4a;box-shadow:inset 0 0 0 2px #c04800"></div>
<div class="t" style="left:2187.4px;top:1525.6px;font-size:22.26px;color:#000;transform:scaleX(1.1049);">in</div>
<div class="a" style="left:2210px;top:1477.5px;width:306.5px;height:115.0px;background:#f1ecfd;border:4px solid #666666"></div>
<div class="t" style="left:2237.1px;top:1489.9px;font-size:23.32px;font-weight:bold;color:#000;transform:scaleX(1.0717);">Bokeh GUI Time Sink</div>
<div class="t" style="left:2228.0px;top:1523.5px;font-size:21.20px;font-weight:bold;color:#000;transform:scaleX(1.0873);">Number of Points:</div>
<div class="t" style="left:2434.6px;top:1523.5px;font-size:21.20px;color:#000;transform:scaleX(1.0545);">1.024k</div>
<div class="t" style="left:2228.0px;top:1555.5px;font-size:21.20px;font-weight:bold;color:#000;transform:scaleX(1.0922);">Sample Rate:</div>
<div class="t" style="left:2381.5px;top:1555.5px;font-size:21.20px;color:#000;transform:scaleX(0.9925);">1M</div>
<svg style="left:0;top:0" width="2641" height="1694"><path d="M1335 526.6L1321 518.6L1321 534.6Z" fill="#000"/><path d="M1335 591L1321 583L1321 599Z" fill="#000"/><path d="M1322 655H1465" fill="none" stroke="#000" stroke-width="3.4" /><path d="M1487 655L1463 645L1463 665Z" fill="#000"/><path d="M1553 559H1588C1600 559 1598 564 1588 566L1509 576" fill="none" stroke="#000" stroke-width="3.4" /><path d="M1454 724C1454 718 1460 718 1466 718" fill="none" stroke="#000" stroke-width="4.2" stroke-dasharray='11 9'/><path d="M1487 718L1463 708L1463 728Z" fill="#000"/><path d="M1831 1039H1858Q1868 1039 1864 1031Q1860 1024 1852 1018L1764 951L1590 830L1456 729" fill="none" stroke="#000" stroke-width="4.2" stroke-dasharray='11 9'/><path d="M2162.5 1167H2198Q2207 1170 2204 1183L2091 1342" fill="none" stroke="#000" stroke-width="4.2" stroke-dasharray='11 9'/><path d="M2180 1345L2098 1303Q2086 1297 2095 1295H2108" fill="none" stroke="#000" stroke-width="4.2" stroke-dasharray='11 9'/><path d="M2131 1295L2107 1285L2107 1305Z" fill="#000"/><path d="M2208 623H2222" stroke="#08357f" stroke-width="3.4" opacity=".9"/><path d="M2245 623L2221 613L2221 633Z" fill="#08357f" opacity=".9"/><path d="M2208 687H2222" stroke="#08357f" stroke-width="3.4" opacity=".9"/><path d="M2245 687L2221 677L2221 697Z" fill="#08357f" opacity=".9"/><path d="M1665 1359H1693" fill="none" stroke="#000" stroke-width="3.4" /><path d="M1717 1359L1693 1349L1693 1369Z" fill="#000"/><path d="M1697 1361C1725 1365 1731 1395 1731 1447C1731 1505 1740 1535 1775 1535" fill="none" stroke="#000" stroke-width="3.4" /><path d="M1797 1535L1773 1525L1773 1545Z" fill="#000"/><path d="M2064.5 1534.6H2160" fill="none" stroke="#000" stroke-width="3.4" /><path d="M2181.5 1534.6L2157.5 1524.6L2157.5 1544.6Z" fill="#000"/></svg>
</div></div>
<div class="a" style="left:2644px;top:200px;width:735px;height:66px;background:#fafafa;border:2px solid #cdc7c2;border-radius:8px"></div>
<svg style="left:2659px;top:216px" width="36" height="36" viewBox="0 0 36 36"><defs><radialGradient id="lg" cx="40%" cy="35%" r="60%"><stop offset="0" stop-color="#ffffff"/><stop offset="1" stop-color="#c8cbd2"/></radialGradient></defs><path d="M20 21L31 31" stroke="#2a2a2a" stroke-width="5" stroke-linecap="round"/><circle cx="14" cy="14" r="10" fill="url(#lg)" stroke="#3b4ea6" stroke-width="3.2"/></svg>
<div class="t" style="left:2706.0px;top:217.3px;font-size:27.14px;color:#2e3436;transform:scaleX(1.0851);">floa</div>
<svg style="left:3334px;top:220px" width="28" height="28" viewBox="0 0 28 28"><path d="M5 5L21 21M21 5L5 21" stroke="#bdbdbd" stroke-width="6" stroke-linecap="round" transform="translate(1,1.5)"/><path d="M5 5L21 21M21 5L5 21" stroke="#7c7c7c" stroke-width="4.6" stroke-linecap="round"/></svg>
<svg style="left:2651.7px;top:284px" width="23" height="13" viewBox="0 0 23 13"><path d="M0 0H23L11.5 12.5Z" fill="#a8a8a8"/></svg>
<div class="t" style="left:2687.6px;top:275.5px;font-size:27.14px;color:#2e3436;transform:scaleX(1.0074);">Core</div>
<svg style="left:2687.6px;top:330.5px" width="23" height="13" viewBox="0 0 23 13"><path d="M0 0H23L11.5 12.5Z" fill="#a8a8a8"/></svg>
<div class="t" style="left:2723.5px;top:321.5px;font-size:27.14px;color:#2e3436;transform:scaleX(1.0437);">Type Converters</div>
<div class="a" style="left:2643px;top:358.6px;width:737px;height:46px;background:#3584e4"></div>
<div class="t" style="left:2760.0px;top:367.2px;font-size:27.56px;color:#ffffff;transform:scaleX(1.0269);">Char To Float</div>
<div class="t" style="left:2760.0px;top:413.2px;font-size:27.56px;color:#2e3436;transform:scaleX(1.0384);">Complex To Float</div>
<div class="t" style="left:2760.0px;top:459.2px;font-size:27.56px;color:#2e3436;transform:scaleX(1.0269);">Float To Char</div>
<div class="t" style="left:2760.0px;top:505.2px;font-size:27.56px;color:#2e3436;transform:scaleX(1.0384);">Float To Complex</div>
<div class="t" style="left:2760.0px;top:551.2px;font-size:27.56px;color:#2e3436;transform:scaleX(1.0487);">Float To Int</div>
<div class="t" style="left:2760.0px;top:597.2px;font-size:27.56px;color:#2e3436;transform:scaleX(1.0399);">Float To Short</div>
<div class="t" style="left:2760.0px;top:643.2px;font-size:27.56px;color:#2e3436;transform:scaleX(1.0193);">Float To UChar</div>
<div class="t" style="left:2760.0px;top:689.2px;font-size:27.56px;color:#2e3436;transform:scaleX(1.0487);">Int To Float</div>
<div class="t" style="left:2760.0px;top:735.2px;font-size:27.56px;color:#2e3436;transform:scaleX(1.0399);">Short To Float</div>
<div class="t" style="left:2760.0px;top:781.2px;font-size:27.56px;color:#2e3436;transform:scaleX(1.0193);">UChar To Float</div>
<div class="t" style="left:0.8px;top:1733.3px;font-size:27.14px;color:#2e3436;transform:scaleX(1.0658);">Block paths:</div>
<div class="t" style="left:65.0px;top:1767.1px;font-size:27.14px;color:#2e3436;transform:scaleX(1.0909);">/root/.local/state/gnuradio</div>
<div class="t" style="left:65.0px;top:1800.9px;font-size:27.14px;color:#2e3436;transform:scaleX(1.0829);">/cortexlab/toolchains/current/share/gnuradio/grc/</div>
<div class="t" style="left:0.8px;top:1834.7px;font-size:27.14px;color:#2e3436;transform:scaleX(1.0565);">blocks</div>
<div class="t" style="left:0.8px;top:1902.3px;font-size:27.14px;color:#2e3436;transform:scaleX(1.0635);">Loading: &quot;/cortexlab/homes/cmorin/Tutorials/Tuto_3/</div>
<div class="t" style="left:0.8px;top:1936.1px;font-size:27.14px;color:#2e3436;transform:scaleX(1.0644);">examples/ofdm_benchmark/ofdm_example_rx.grc&quot;</div>
<div class="t" style="left:0.8px;top:1969.9px;font-size:27.14px;color:#2e3436;transform:scaleX(1.1658);">&gt;&gt;&gt; Done</div>
<div class="a" style="left:700px;top:1696px;width:1941px;height:340px;overflow:hidden"><div class="a" style="left:-700px;top:-1696px;width:2641px;height:2036px">
<div class="a" style="left:937px;top:1700px;width:1px;height:44px;background:#e4e2df"></div>
<div class="a" style="left:700px;top:1744px;width:1941px;height:1px;background:#eceae7"></div>
<div class="t" style="left:710.7px;top:1704.4px;font-size:27.14px;font-weight:bold;color:#9a9c9c;transform:scaleX(1.1341);">ID</div>
<div class="t" style="left:953.5px;top:1704.4px;font-size:27.14px;font-weight:bold;color:#9a9c9c;transform:scaleX(1.1290);">Value</div>
<svg style="left:707.7px;top:1762.8px" width="23" height="13" viewBox="0 0 23 13"><path d="M0 0H23L11.5 12.5Z" fill="#a8a8a8"/></svg>
<div class="t" style="left:744.0px;top:1752.9px;font-size:27.14px;color:#2e3436;transform:scaleX(1.0865);">Imports</div>
<div class="t" style="left:780.0px;top:1799.4px;font-size:27.14px;color:#2e3436;transform:scaleX(1.0761);">import_0</div>
<div class="t" style="left:948.0px;top:1799.4px;font-size:27.14px;color:#2e3436;transform:scaleX(1.0878);">import numpy as np</div>
<svg style="left:707.7px;top:1854.5px" width="23" height="13" viewBox="0 0 23 13"><path d="M0 0H23L11.5 12.5Z" fill="#a8a8a8"/></svg>
<div class="t" style="left:744.0px;top:1845.7px;font-size:27.14px;color:#2e3436;transform:scaleX(1.0528);">Variables</div>
<div class="a" style="left:780px;top:1874.4px;width:155px;height:60px;overflow:hidden">
<div class="t" style="left:0.0px;top:16.9px;font-size:27.14px;color:#2e3436;transform:scaleX(1.0756);">byte_amount</div>
</div>
<div class="t" style="left:948.0px;top:1891.3px;font-size:27.14px;color:#2e3436;transform:scaleX(1.0792);">480</div>
<div class="a" style="left:780px;top:1920.5px;width:155px;height:60px;overflow:hidden">
<div class="t" style="left:0.0px;top:16.9px;font-size:27.14px;color:#2e3436;transform:scaleX(1.0504);">byte_sequence</div>
</div>
<div class="t" style="left:948.0px;top:1937.8px;font-size:26.66px;color:#2e3436;transform:scaleX(1.0852);">[172, 47, 117, 192, 67, 251, 195, 103, 9, 211, 21, 242, 36, 87, 70, 216, 88, 140, 58, 193, 230, 39, 87, 174, 88, 81, 165, 25, 77, 72, 9, 141, 52, 113]</div>
<div class="a" style="left:780px;top:1966.6000000000001px;width:155px;height:60px;overflow:hidden">
<div class="t" style="left:0.0px;top:16.9px;font-size:27.14px;color:#2e3436;transform:scaleX(1.0281);">cp_len</div>
</div>
<div class="t" style="left:948.0px;top:1983.5px;font-size:27.14px;color:#2e3436;transform:scaleX(1.0792);">16</div>
<div class="a" style="left:780px;top:2012.7000000000003px;width:155px;height:60px;overflow:hidden">
<div class="t" style="left:0.0px;top:16.9px;font-size:27.14px;color:#2e3436;transform:scaleX(1.0835);">fft_len</div>
</div>
<div class="t" style="left:948.0px;top:2029.6px;font-size:27.14px;color:#2e3436;transform:scaleX(1.0792);">20</div>
</div></div>
<div class="a" style="left:0px;top:2034px;width:3380px;height:2px;background:#1e1e1e"></div>
<div class="a" style="left:35px;top:201px;width:1288px;height:1516px;border-radius:16px 16px 0 0;background:#2a2a2a;border-top:2px solid #383838;box-shadow:0 4px 18px 2px rgba(0,0,0,.32)"></div>
<div class="a" style="left:37px;top:266px;width:1284px;height:1449px;background:#f6f5f4"></div>
<div class="t" style="left:393.5px;top:222.1px;font-size:27.00px;color:#ffffff;transform:scaleX(0.9814);">Properties: Bokeh GUI Time Sink (sur mnode16)</div>
<svg style="left:1269px;top:217px" width="36" height="36" viewBox="0 0 36 36"><circle cx="18" cy="18" r="18" fill="#fd7137"/><path d="M11 11L25 25M25 11L11 25" stroke="#fff" stroke-width="4.8"/></svg>
<div class="a" style="left:41px;top:271px;width:1276px;height:73px;background:#e1dedb"></div>
<div class="a" style="left:41px;top:344px;width:1276px;height:1px;background:#cdc7c2"></div>
<div class="a" style="left:57px;top:337px;width:150px;height:7px;background:#3584e4"></div>
<div class="t" style="left:82.0px;top:291.9px;font-size:27.14px;color:#2e3436;transform:scaleX(1.0450);">General</div>
<div class="t" style="left:247.4px;top:291.9px;font-size:27.14px;color:#2e3436;transform:scaleX(1.0477);">Advanced</div>
<div class="t" style="left:439.0px;top:291.9px;font-size:27.14px;color:#2e3436;transform:scaleX(1.0393);">Trigger</div>
<div class="t" style="left:591.0px;top:291.9px;font-size:27.14px;color:#2e3436;transform:scaleX(1.0471);">Config</div>
<div class="t" style="left:737.6px;top:291.9px;font-size:27.14px;color:#2e3436;transform:scaleX(1.0813);">Documentation</div>
<div class="a" style="left:41px;top:345px;width:1276px;height:1298px;background:#ffffff"></div>
<div class="t" style="left:162.4px;top:367.4px;font-size:25.44px;color:#2e3436;transform:scaleX(0.9995);">Type</div>
<div class="a" style="left:341px;top:348px;width:319px;height:66px;background:linear-gradient(#f4f3f2,#edebe9);border:2px solid #cdc7c2;border-radius:8px"></div>
<div class="t" style="left:366.0px;top:365.6px;font-size:27.56px;color:#2e3436;transform:scaleX(1.0480);">Float</div>
<svg style="left:612px;top:375px" width="24" height="12" viewBox="0 0 24 12"><path d="M0 0H24L12 12Z" fill="#2e3436"/></svg>
<div class="t" style="left:154.6px;top:439.4px;font-size:25.44px;color:#2e3436;transform:scaleX(1.0434);">Name</div>
<div class="a" style="left:341px;top:420px;width:835px;height:66px;background:#fff;border:2px solid #cdc7c2;border-radius:8px"></div>
<div class="t" style="left:360.0px;top:437.6px;font-size:27.56px;color:#000000;transform:scaleX(1.2224);">&quot;&quot;</div>
<div class="t" style="left:1202.2px;top:439.4px;font-size:25.44px;color:#2e3436;transform:scaleX(1.1477);">[string]</div>
<div class="t" style="left:117.8px;top:511.4px;font-size:25.44px;color:#2e3436;transform:scaleX(1.0351);">Y Axis Label</div>
<div class="a" style="left:341px;top:492px;width:835px;height:66px;background:#fff;border:2px solid #cdc7c2;border-radius:8px"></div>
<div class="t" style="left:360.0px;top:509.6px;font-size:27.56px;color:#000000;transform:scaleX(1.0871);">Amplitude</div>
<div class="t" style="left:1202.2px;top:511.4px;font-size:25.44px;color:#2e3436;transform:scaleX(1.1477);">[string]</div>
<div class="t" style="left:125.7px;top:583.4px;font-size:25.44px;color:#2e3436;transform:scaleX(1.0492);">Y Axis Unit</div>
<div class="a" style="left:341px;top:564px;width:835px;height:66px;background:#fff;border:2px solid #cdc7c2;border-radius:8px"></div>
<div class="t" style="left:360.0px;top:581.6px;font-size:27.56px;color:#000000;transform:scaleX(1.2224);">&quot;&quot;</div>
<div class="t" style="left:1202.2px;top:583.4px;font-size:25.44px;color:#2e3436;transform:scaleX(1.1477);">[string]</div>
<div class="t" style="left:122.6px;top:655.4px;font-size:25.44px;color:#2e3436;transform:scaleX(1.0215);">Y Axis Type</div>
<div class="a" style="left:341px;top:636px;width:159px;height:66px;background:linear-gradient(#f4f3f2,#edebe9);border:2px solid #cdc7c2;border-radius:8px"></div>
<div class="t" style="left:366.0px;top:653.6px;font-size:27.56px;color:#2e3436;transform:scaleX(1.0547);">Linear</div>
<svg style="left:452px;top:663px" width="24" height="12" viewBox="0 0 24 12"><path d="M0 0H24L12 12Z" fill="#2e3436"/></svg>
<div class="t" style="left:116.9px;top:727.4px;font-size:25.44px;color:#2e3436;transform:scaleX(1.0445);">X Axis Label</div>
<div class="a" style="left:341px;top:708px;width:835px;height:66px;background:#fff;border:2px solid #cdc7c2;border-radius:8px"></div>
<div class="t" style="left:360.0px;top:725.6px;font-size:27.56px;color:#000000;transform:scaleX(1.0566);">Time</div>
<div class="t" style="left:1202.2px;top:727.4px;font-size:25.44px;color:#2e3436;transform:scaleX(1.1477);">[string]</div>
<div class="t" style="left:124.8px;top:799.4px;font-size:25.44px;color:#2e3436;transform:scaleX(1.0597);">X Axis Unit</div>
<div class="a" style="left:341px;top:780px;width:835px;height:66px;background:#fff;border:2px solid #cdc7c2;border-radius:8px"></div>
<div class="t" style="left:360.0px;top:797.6px;font-size:27.56px;color:#000000;transform:scaleX(1.2224);">&quot;&quot;</div>
<div class="t" style="left:1202.2px;top:799.4px;font-size:25.44px;color:#2e3436;transform:scaleX(1.1477);">[string]</div>
<div class="t" style="left:121.7px;top:871.4px;font-size:25.44px;color:#2e3436;transform:scaleX(1.0314);">X Axis Type</div>
<div class="a" style="left:341px;top:852px;width:159px;height:66px;background:linear-gradient(#f4f3f2,#edebe9);border:2px solid #cdc7c2;border-radius:8px"></div>
<div class="t" style="left:366.0px;top:869.6px;font-size:27.56px;color:#2e3436;transform:scaleX(1.0547);">Linear</div>
<svg style="left:452px;top:879px" width="24" height="12" viewBox="0 0 24 12"><path d="M0 0H24L12 12Z" fill="#2e3436"/></svg>
<div class="t" style="left:86.6px;top:943.4px;font-size:25.44px;color:#2e3436;transform:scaleX(1.0527);">Number of Points</div>
<div class="a" style="left:341px;top:924px;width:835px;height:66px;background:#fff;border:2px solid #cdc7c2;border-radius:8px"></div>
<div class="t" style="left:360.0px;top:941.6px;font-size:27.56px;color:#000000;transform:scaleX(1.0792);">1024</div>
<div class="t" style="left:1221.0px;top:943.4px;font-size:25.44px;color:#2e3436;transform:scaleX(1.2198);">[int]</div>
<div class="t" style="left:113.7px;top:1015.4px;font-size:25.44px;color:#2e3436;transform:scaleX(1.0380);">Sample Rate</div>
<div class="a" style="left:112px;top:1043.5px;width:154px;height:1.5px;background:#2e3436"></div>
<div class="a" style="left:341px;top:996px;width:835px;height:66px;background:#fff;border:2px solid #cdc7c2;border-radius:8px"></div>
<div class="t" style="left:360.0px;top:1013.6px;font-size:27.56px;color:#000000;transform:scaleX(1.0531);">samp_rate</div>
<div class="t" style="left:1209.7px;top:1015.4px;font-size:25.44px;color:#2e3436;transform:scaleX(1.1676);">[float]</div>
<div class="t" style="left:164.8px;top:1087.4px;font-size:25.44px;color:#2e3436;transform:scaleX(1.0480);">Grid</div>
<div class="a" style="left:341px;top:1068px;width:121px;height:66px;background:linear-gradient(#f4f3f2,#edebe9);border:2px solid #cdc7c2;border-radius:8px"></div>
<div class="t" style="left:366.0px;top:1085.6px;font-size:27.56px;color:#2e3436;transform:scaleX(1.0035);">No</div>
<svg style="left:414px;top:1095px" width="24" height="12" viewBox="0 0 24 12"><path d="M0 0H24L12 12Z" fill="#2e3436"/></svg>
<div class="t" style="left:156.2px;top:1159.4px;font-size:25.44px;color:#2e3436;transform:scaleX(1.0461);">Y min</div>
<div class="a" style="left:155px;top:1187.5px;width:69px;height:1.5px;background:#2e3436"></div>
<div class="a" style="left:341px;top:1140px;width:835px;height:66px;background:#fff;border:2px solid #cdc7c2;border-radius:8px"></div>
<div class="t" style="left:360.0px;top:1157.6px;font-size:27.56px;color:#000000;transform:scaleX(1.0579);">-1</div>
<div class="t" style="left:1209.7px;top:1159.4px;font-size:25.44px;color:#2e3436;transform:scaleX(1.1676);">[float]</div>
<div class="t" style="left:152.7px;top:1231.4px;font-size:25.44px;color:#2e3436;transform:scaleX(1.0410);">Y max</div>
<div class="a" style="left:151px;top:1259.5px;width:76px;height:1.5px;background:#2e3436"></div>
<div class="a" style="left:341px;top:1212px;width:835px;height:66px;background:#fff;border:2px solid #cdc7c2;border-radius:8px"></div>
<div class="t" style="left:360.0px;top:1229.6px;font-size:27.56px;color:#000000;transform:scaleX(1.0792);">1</div>
<div class="t" style="left:1209.7px;top:1231.4px;font-size:25.44px;color:#2e3436;transform:scaleX(1.1676);">[float]</div>
<div class="t" style="left:85.3px;top:1303.4px;font-size:25.44px;color:#2e3436;transform:scaleX(1.0734);">Number of Inputs</div>
<div class="a" style="left:341px;top:1284px;width:835px;height:66px;background:#fff;border:2px solid #cdc7c2;border-radius:8px"></div>
<div class="t" style="left:360.0px;top:1301.6px;font-size:27.56px;color:#000000;transform:scaleX(1.0792);">1</div>
<div class="t" style="left:1221.0px;top:1303.4px;font-size:25.44px;color:#2e3436;transform:scaleX(1.2198);">[int]</div>
<div class="t" style="left:105.3px;top:1375.4px;font-size:25.44px;color:#2e3436;transform:scaleX(1.0414);">Update Period</div>
<div class="a" style="left:341px;top:1356px;width:835px;height:66px;background:#fff;border:2px solid #cdc7c2;border-radius:8px"></div>
<div class="t" style="left:360.0px;top:1373.6px;font-size:27.56px;color:#000000;transform:scaleX(1.0792);">100</div>
<div class="t" style="left:1221.0px;top:1375.4px;font-size:25.44px;color:#2e3436;transform:scaleX(1.2198);">[int]</div>
<div class="t" style="left:126.7px;top:1447.4px;font-size:25.44px;color:#2e3436;transform:scaleX(1.0531);">Placement</div>
<div class="a" style="left:341px;top:1428px;width:795px;height:66px;background:#fff;border:2px solid #cdc7c2;border-radius:8px"></div>
<div class="t" style="left:360.0px;top:1445.6px;font-size:27.56px;color:#000000;transform:scaleX(1.0793);">0,1</div>
<div class="t" style="left:1157.9px;top:1447.4px;font-size:25.44px;color:#2e3436;transform:scaleX(1.1102);">[int_vector]</div>
<div class="t" style="left:129.4px;top:1519.4px;font-size:25.44px;color:#2e3436;transform:scaleX(1.0251);">Disp. Tags</div>
<div class="a" style="left:341px;top:1500px;width:121px;height:66px;background:linear-gradient(#f4f3f2,#edebe9);border:2px solid #cdc7c2;border-radius:8px"></div>
<div class="t" style="left:366.0px;top:1517.6px;font-size:27.56px;color:#2e3436;transform:scaleX(0.9335);">Yes</div>
<svg style="left:414px;top:1527px" width="24" height="12" viewBox="0 0 24 12"><path d="M0 0H24L12 12Z" fill="#2e3436"/></svg>
<div class="a" style="left:785px;top:1643px;width:172px;height:68px;background:linear-gradient(#f4f3f2,#edebe9);border:2px solid #cdc7c2;border-radius:10px"></div>
<div class="t" style="left:852.2px;top:1662.6px;font-size:27.56px;color:#2e3436;transform:scaleX(0.9421);">OK</div>
<div class="a" style="left:965px;top:1643px;width:172px;height:68px;background:linear-gradient(#f4f3f2,#edebe9);border:2px solid #cdc7c2;border-radius:10px"></div>
<div class="t" style="left:1007.0px;top:1662.6px;font-size:27.56px;color:#2e3436;transform:scaleX(1.0267);">Cancel</div>
<div class="a" style="left:1145px;top:1643px;width:172px;height:68px;background:#f9f8f7;border:2px solid #cdc7c2;border-radius:10px"></div>
<div class="t" style="left:1194.3px;top:1662.6px;font-size:27.56px;color:#8b8e8f;transform:scaleX(1.0647);">Apply</div>
</body></html>
